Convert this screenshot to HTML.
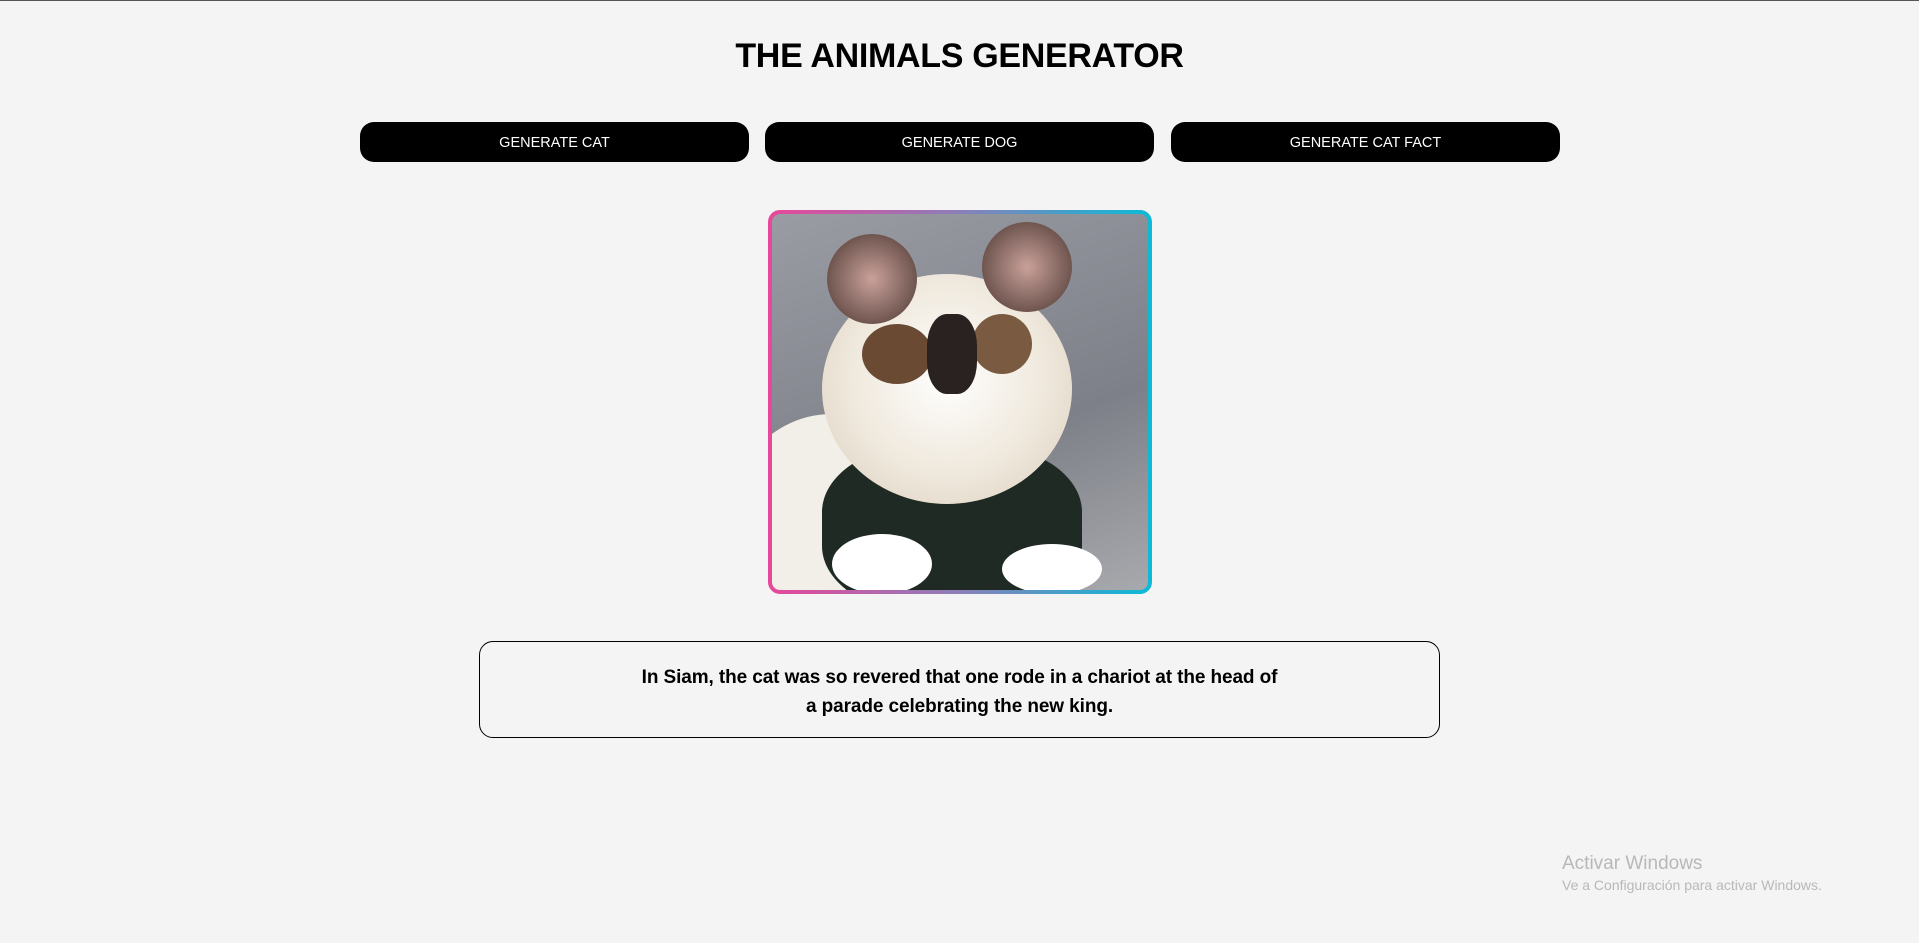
<!DOCTYPE html>
<html><head><meta charset="utf-8"><style>
html,body{margin:0;padding:0}
body{width:1919px;height:943px;background:#f4f4f4;font-family:"Liberation Sans",sans-serif;position:relative;overflow:hidden;border-top:1px solid #555;box-sizing:border-box}
h1{position:absolute;top:36px;left:0;width:1919px;text-align:center;margin:0;font-size:34px;font-weight:bold;color:#000;letter-spacing:-0.3px}
.btn{position:absolute;top:121px;height:40px;width:389px;background:#000;color:#fff;border-radius:14px;font-size:14.5px;text-align:center;line-height:43px}
.frame{position:absolute;left:768px;top:209px;width:384px;height:384px;border-radius:12px;background:linear-gradient(90deg,#e8479a,#8a7fb8 50%,#0abbd8);}
.img{position:absolute;left:4px;top:4px;right:4px;bottom:4px;border-radius:8px;overflow:hidden;background:linear-gradient(160deg,#9a9ca4,#7d8088 60%,#a8a9ad);}
.img div{position:absolute;border-radius:50%}
.fact{position:absolute;left:479px;top:640px;width:961px;height:97px;border:1px solid #000;border-radius:14px;box-sizing:border-box;text-align:center;font-weight:bold;font-size:19px;line-height:29px;padding-top:21px;letter-spacing:-0.1px}
.wm{position:absolute;left:1562px;top:852px;color:#b8b8b8;font-size:19px}
.wm small{display:block;font-size:14px;margin-top:2px}
</style></head><body>
<h1>THE ANIMALS GENERATOR</h1>
<div class="btn" style="left:360px">GENERATE CAT</div>
<div class="btn" style="left:765px">GENERATE DOG</div>
<div class="btn" style="left:1171px">GENERATE CAT FACT</div>
<div class="frame"><div class="img">
<div style="left:-40px;top:200px;width:200px;height:200px;background:#f2efe9"></div>
<div style="left:50px;top:230px;width:260px;height:170px;border-radius:40%;background:#1f2a24"></div>
<div style="left:50px;top:60px;width:250px;height:230px;background:radial-gradient(circle at 50% 45%,#fff,#efe8dc 55%,#d9cdbc)"></div>
<div style="left:55px;top:20px;width:90px;height:90px;background:radial-gradient(#c9a19a,#4a3530)"></div>
<div style="left:210px;top:8px;width:90px;height:90px;background:radial-gradient(#c9a19a,#4a3530)"></div>
<div style="left:90px;top:110px;width:70px;height:60px;background:#6b4a33"></div>
<div style="left:200px;top:100px;width:60px;height:60px;background:#7a5a40"></div>
<div style="left:155px;top:100px;width:50px;height:80px;border-radius:40%;background:#2a2220"></div>
<div style="left:60px;top:320px;width:100px;height:60px;background:#fff"></div>
<div style="left:230px;top:330px;width:100px;height:50px;background:#fff"></div>
</div></div>
<div class="fact">In Siam, the cat was so revered that one rode in a chariot at the head of<br>a parade celebrating the new king.</div>
<div class="wm">Activar Windows<small>Ve a Configuración para activar Windows.</small></div>
</body></html>
